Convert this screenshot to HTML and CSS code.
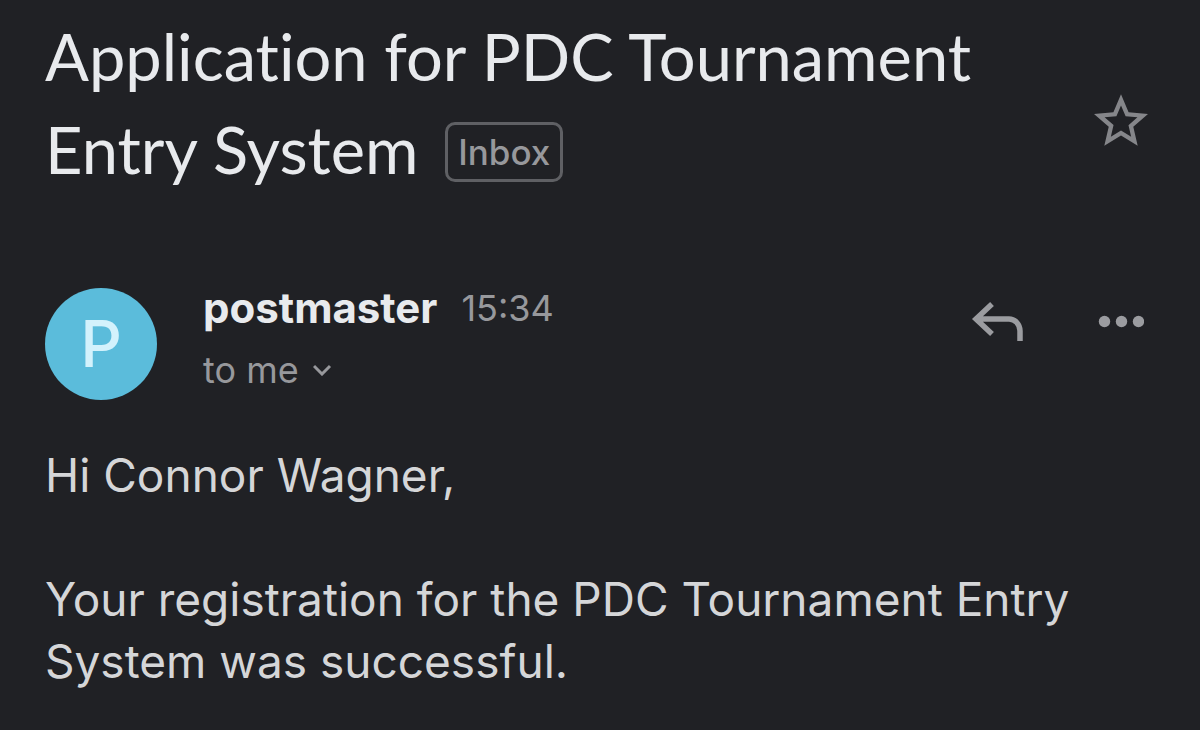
FILE: index.html
```html
<!DOCTYPE html>
<html lang="en">
  <head>
    <meta charset="utf-8">
    <meta name="viewport" content="width=device-width, initial-scale=1">
    <title>Application for PDC Tournament Entry System</title>
    <link rel="stylesheet" href="styles.css">
  </head>
  <body>
    <main class="mail">
      <header class="subject">
        <div class="title">
          <h1>Application for PDC Tournament Entry System</h1>
          <button type="button" class="label">Inbox</button>
        </div>
        <button type="button" class="icon-btn star" aria-label="Star">
          <svg width="54" height="52" viewBox="2 2 20 19"><path fill="#85868a" d="M22 9.240l-7.190-.62L12 2 9.190 8.630 2 9.240l5.460 4.730L5.820 21 12 17.270 18.180 21l-1.630-7.030L22 9.240zM12 15.400l-3.760 2.270 1-4.280-3.320-2.880 4.380-.38L12 6.100l1.710 4.040 4.380.38-3.320 2.880 1 4.280L12 15.400z"/></svg>
        </button>
      </header>

      <section class="sender">
        <div class="avatar">P</div>
        <div class="info">
          <div class="from"><span class="name">postmaster</span><time class="time">15:34</time></div>
          <button type="button" class="to">to me
            <svg width="20" height="12" viewBox="0 0 20 12"><path d="M1 2l8 8 8-8" fill="none" stroke="#97989c" stroke-width="3"/></svg>
          </button>
        </div>
        <div class="actions">
          <button type="button" class="icon-btn" aria-label="Reply">
            <svg width="52" height="42" viewBox="0 0 52 42"><path d="M21 4L5 19l16 15M5 19h33a11 12 0 0 1 11 12v10" fill="none" stroke="#9b9ca0" stroke-width="5.500"/></svg>
          </button>
          <button type="button" class="icon-btn" aria-label="More">
            <svg width="46" height="42" viewBox="0 0 46 42"><g fill="#9b9ca0"><circle cx="6.500" cy="21.500" r="5.700"/><circle cx="23.500" cy="21.500" r="5.700"/><circle cx="40.500" cy="21.500" r="5.700"/></g></svg>
          </button>
        </div>
      </section>

      <article class="message">
        <p>Hi Connor Wagner,</p>
        <p>Your registration for the PDC Tournament Entry System was successful.</p>
      </article>
    </main>
  </body>
</html>
```
FILE: styles.css
```css
* {
  box-sizing: border-box;
}
body {
  margin: 0;
  background: #202125;
  color: #e8eaed;
  font-family: Inter, "Liberation Sans", sans-serif;
}
button {
  padding: 0;
  border: 0;
  background: none;
  color: inherit;
  font: inherit;
  cursor: pointer;
}
svg {
  display: block;
}
.mail {
  padding: 10px 52px 24px 45px;
}
.icon-btn {
  display: flex;
  justify-content: center;
  min-width: 54px;
}
.subject {
  display: flex;
  align-items: flex-start;
  justify-content: space-between;
  gap: 40px;
}
.title {
  flex: 1;
  max-width: 960px;
  font-family: Lato, sans-serif;
  font-size: 65px;
  line-height: 93px;
}
.title h1 {
  display: inline;
  font-size: inherit;
  font-weight: 400;
  font-variant-ligatures: none;
}
.label {
  height: 60px;
  margin-left: 10px;
  padding: 0 10px;
  border: 3px solid #5f6064;
  border-radius: 10px;
  color: #97989c;
  font-family: Inter, sans-serif;
  font-size: 35px;
  font-weight: 500;
  line-height: 54px;
  vertical-align: 9px;
}
.star {
  margin-top: 84px;
}
.sender {
  display: flex;
  gap: 46px;
  margin-top: 92px;
}
.avatar {
  width: 112px;
  height: 112px;
  border-radius: 50%;
  background: #5bbcdb;
  color: #d3f2fc;
  font-size: 65px;
  font-weight: 500;
  line-height: 112px;
  text-align: center;
}
.info {
  flex: 1;
}
.from {
  display: flex;
  gap: 24px;
  align-items: center;
  line-height: 40px;
}
.name {
  font-size: 42px;
  font-weight: 700;
}
.time {
  color: #97989c;
  font-size: 36px;
}
.to {
  display: flex;
  align-items: center;
  gap: 14px;
  margin-top: 20px;
  color: #97989c;
  font-size: 36px;
  line-height: 44px;
}
.actions {
  display: flex;
  gap: 70px;
  align-items: flex-start;
  padding-top: 12px;
}
.message {
  margin-top: 44px;
  color: #d5d6d8;
  font-size: 46px;
  line-height: 62px;
}
.message p {
  margin: 0 0 62px;
}
.message p:last-child {
  margin-bottom: 0;
}
```
